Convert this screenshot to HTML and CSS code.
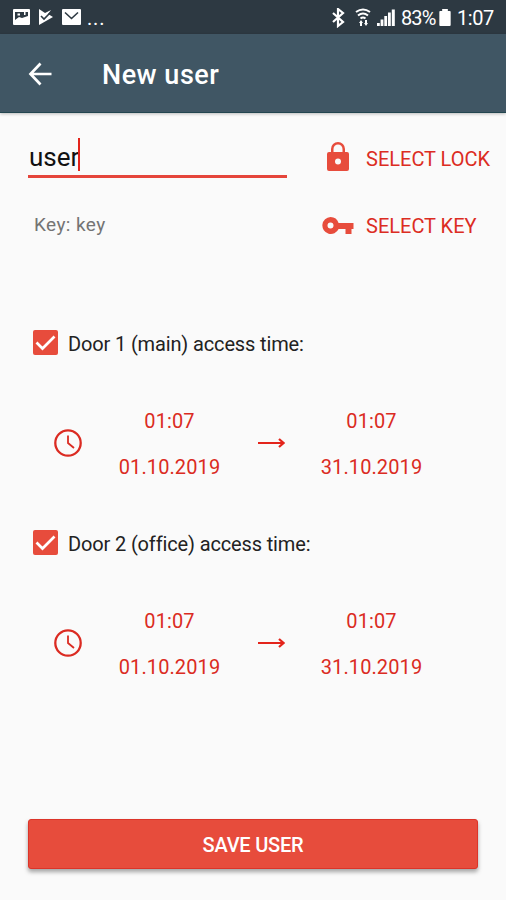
FILE: index.html
```html
<!DOCTYPE html>
<html lang="en">
<head>
<meta charset="utf-8">
<title>New user</title>
<link rel="stylesheet" href="styles.css">
</head>
<body>
<div class="statusbar">
  <svg class="notif" width="76" height="20" viewBox="0 0 76 20">
    <path fill="#fff" fill-rule="evenodd" d="M3 1h15q1 0 1 1v14q0 1-1 1H3q-1 0-1-1V2q0-1 1-1zM4 4v8l4-3 3 1 6-2V4z"/>
    <path fill="#fff" d="M6.500 5.500H9v2H6.500zM13 4h1.500v3H13z"/>
    <path fill="#fff" d="M28 1l6 4 6-3-3 4 5 3-14 8z"/>
    <path fill="none" stroke="#2d3942" stroke-width="1.6" d="M30 8l3 3 6-6"/>
    <rect x="51" y="1" width="19" height="16" rx="1" fill="#fff"/>
    <path fill="none" stroke="#2d3942" stroke-width="1.6" d="M54 4.500l6.500 6L67 4.500"/>
  </svg>
  <span class="more">...</span>
  <svg class="radio" width="66" height="20" viewBox="0 0 66 20">
    <path fill="none" stroke="#fff" stroke-width="2.200" d="M2 5l10 9-5 4V1l5 4L2 14"/>
    <path fill="none" stroke="#fff" stroke-width="2" d="M25 4q7-5 14 0M27 7.500q5-4 10 0M29.500 10.500q2.500-2 5 0"/>
    <path fill="#fff" d="M28 15l2-3 2 3h-1v3h-2v-3zM33 15h1v-3h2v3h1l-2 3z"/>
    <path fill="#fff" d="M46 15h2.800v3H46zM49.600 11.500h2.800V18h-2.800zM53.300 8h2.800v10h-2.800zM57 4.500h2.800V18H57zM60.800 1.500h3V18h-3z"/>
  </svg>
  <span class="percent">83%</span>
  <svg class="battery" width="12" height="17" viewBox="0 0 12 18"><path fill="#fff" d="M3 0h6v2h2q1 0 1 1v14q0 1-1 1H1q-1 0-1-1V3q0-1 1-1h2z"/></svg>
  <span class="clock">1:07</span>
</div>
<header class="appbar">
  <svg class="back" width="24" height="24" viewBox="0 0 24 24"><path fill="none" stroke="#fff" stroke-width="2.700" d="M12.500 1.500L2.500 12l10 10.500M2.500 12H23.500"/></svg>
  <h1 class="title">New user</h1>
</header>
<main class="content">
  <div class="row name-row">
    <div class="field"><span class="value">user</span><span class="caret"></span></div>
    <div class="pick pick-lock">
      <svg width="24" height="30" viewBox="0 0 24 30"><path fill="#e74c3c" fill-rule="evenodd" d="M3 10h2V7a7 7 0 0 1 14 0v3h2q2 0 2 2v15q0 2-2 2H3q-2 0-2-2V12q0-2 2-2zM7.500 10h9V7a4.500 4.500 0 0 0-9 0zM12 16.500a3 3 0 1 0 0 6 3 3 0 0 0 0-6z"/></svg>
      <span class="pick-label">SELECT LOCK</span>
    </div>
  </div>
  <div class="row key-row">
    <span class="key">Key: key</span>
    <div class="pick pick-key">
      <svg width="32" height="18" viewBox="0 0 32 18"><path fill="#e74c3c" fill-rule="evenodd" d="M8.500 0a8.500 8.500 0 0 1 8.100 6H31.500v6H29.500v5h-6v-5h-6.900A8.500 8.500 0 1 1 8.500 0zM8.500 5.500a3 3 0 1 0 0 6 3 3 0 0 0 0-6z"/></svg>
      <span class="pick-label">SELECT KEY</span>
    </div>
  </div>
  <section class="door">
    <div class="door-head">
      <svg width="25" height="25" viewBox="0 0 25 25"><rect width="25" height="25" rx="2" fill="#e74c3c"/><path fill="none" stroke="#fff" stroke-width="2.700" d="M3.500 12.500l6 6L21.500 6.500"/></svg>
      <span class="door-label">Door 1 (main) access time:</span>
    </div>
    <div class="times">
      <svg class="dial" width="28" height="28" viewBox="0 0 28 28"><circle cx="14" cy="14" r="12.700" fill="none" stroke="#db2b22" stroke-width="2.300"/><path fill="none" stroke="#db2b22" stroke-width="1.800" d="M14 6.500V14l6 5"/></svg>
      <div class="stamp"><span class="hour">01:07</span><span class="date">01.10.2019</span></div>
      <svg class="arrow" width="27" height="12" viewBox="0 0 27 12"><path fill="none" stroke="#e3241b" stroke-width="2.200" d="M0 6H25M21 2l4.500 4L21 10"/></svg>
      <div class="stamp"><span class="hour">01:07</span><span class="date">31.10.2019</span></div>
    </div>
  </section>
  <section class="door">
    <div class="door-head">
      <svg width="25" height="25" viewBox="0 0 25 25"><rect width="25" height="25" rx="2" fill="#e74c3c"/><path fill="none" stroke="#fff" stroke-width="2.700" d="M3.500 12.500l6 6L21.500 6.500"/></svg>
      <span class="door-label">Door 2 (office) access time:</span>
    </div>
    <div class="times">
      <svg class="dial" width="28" height="28" viewBox="0 0 28 28"><circle cx="14" cy="14" r="12.700" fill="none" stroke="#db2b22" stroke-width="2.300"/><path fill="none" stroke="#db2b22" stroke-width="1.800" d="M14 6.500V14l6 5"/></svg>
      <div class="stamp"><span class="hour">01:07</span><span class="date">01.10.2019</span></div>
      <svg class="arrow" width="27" height="12" viewBox="0 0 27 12"><path fill="none" stroke="#e3241b" stroke-width="2.200" d="M0 6H25M21 2l4.500 4L21 10"/></svg>
      <div class="stamp"><span class="hour">01:07</span><span class="date">31.10.2019</span></div>
    </div>
  </section>
  <button class="save">SAVE USER</button>
</main>
</body>
</html>
```
FILE: styles.css
```css
* { box-sizing: border-box; }
body {
  margin: 0;
  height: 900px;
  display: flex;
  flex-direction: column;
  overflow: hidden;
  background: #fafafa;
  font-family: Roboto, sans-serif;
  white-space: nowrap;
}
svg { display: block; flex: none; }
.statusbar {
  height: 34px;
  flex: none;
  display: flex;
  align-items: center;
  padding: 2px 13px 0 11px;
  background: #2d3942;
  color: #fff;
  font-size: 20px;
  line-height: 34px;
}
.more { letter-spacing: 0.8px; }
.radio { margin-left: auto; }
.percent { margin-left: 4px; width: 38px; letter-spacing: -0.9px; }
.battery { margin: 0 6px 1px 0; }
.clock { width: 36px; letter-spacing: -0.4px; }
.appbar {
  height: 79px;
  flex: none;
  display: flex;
  align-items: center;
  padding: 1px 0 0 28px;
  background: #405664;
  border-bottom: 1px solid #234650;
  box-shadow: 0 1px 3px rgba(0, 0, 0, 0.25);
}
.title {
  margin: 3px 0 0 50px;
  color: #fff;
  font-size: 27px;
  font-weight: 500;
  letter-spacing: 0.5px;
}
.content { flex: 1; display: flex; flex-direction: column; padding: 0 28px; }
.row { display: flex; }
.name-row { height: 65px; }
.field {
  width: 259px;
  display: flex;
  align-items: center;
  padding-top: 26px;
  border-bottom: 3px solid #e5453b;
  color: #111;
  font-size: 26px;
}
.caret { width: 2px; height: 33px; background: #e3241b; margin: -5px 0 0 -1px; }
.pick { display: flex; align-items: center; color: #dc2c22; font-size: 20px; }
.value { padding-left: 1px; }
.pick-lock { margin: 26px -20px 0 39px; gap: 16px; }
.pick-lock svg { margin-top: -3px; }
.key-row { height: 48px; margin-top: 24px; }
.key { width: 294px; padding-left: 6px; line-height: 46px; font-size: 19px; letter-spacing: 0.4px; color: #747474; }
.pick-key { gap: 12px; }
.door { height: 200px; }
.key-row + .door { margin-top: 80px; }
.door-head { display: flex; align-items: center; gap: 10px; margin-left: 5px; height: 25px; }
.door-label { padding-top: 2px; font-size: 20px; letter-spacing: -0.14px; color: #222; }
.times { display: flex; align-items: center; height: 92px; margin: 42px 0 0 26px; }
.stamp {
  width: 119px;
  padding-top: 2px;
  display: flex;
  flex-direction: column;
  align-items: center;
  color: #db2b22;
  font-size: 20px;
  letter-spacing: 0.1px;
  line-height: 46px;
}
.dial { margin-right: 28px; }
.arrow { margin: 0 27px 0 29px; }
.save {
  width: 450px;
  height: 50px;
  margin-top: 89px;
  padding: 2px 0 0;
  border: 1px solid #dc3429;
  border-radius: 3px;
  background: #e74c3c;
  box-shadow: 0 3px 4px rgba(0, 0, 0, 0.35);
  color: #fff;
  font: 500 20px Roboto, sans-serif;
  letter-spacing: -0.2px;
}
```
